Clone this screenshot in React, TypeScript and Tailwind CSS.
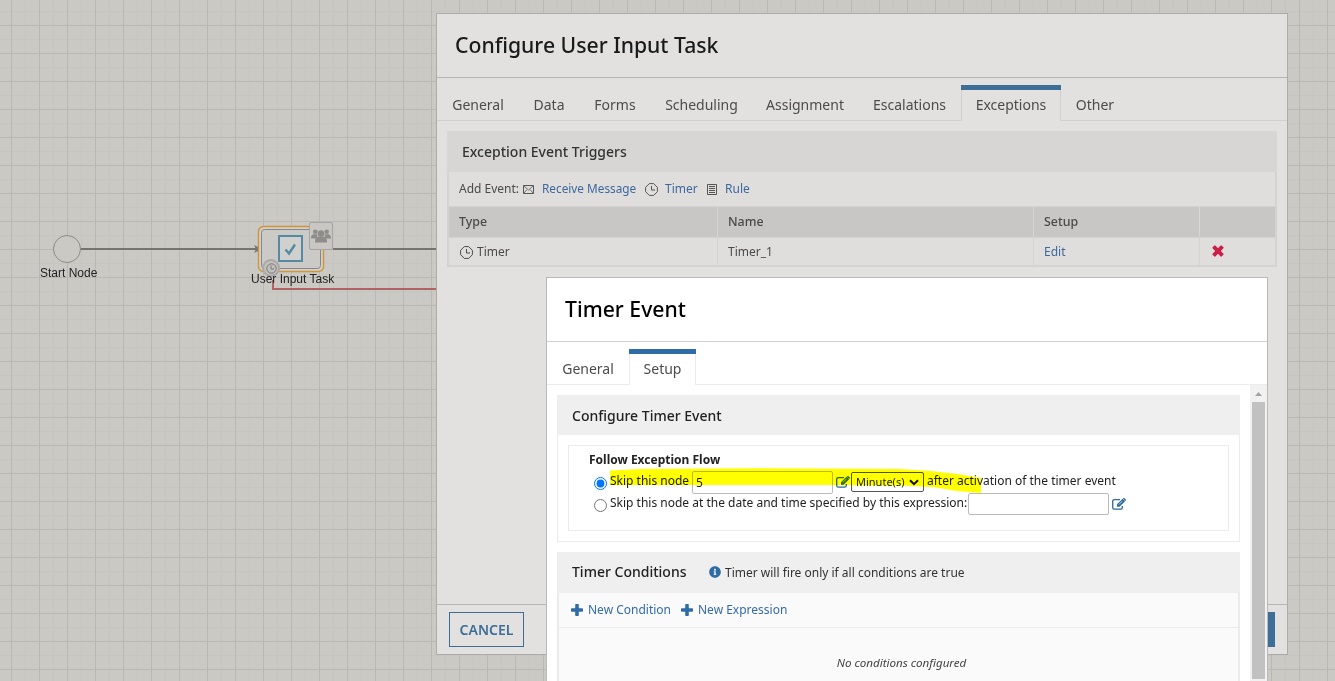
import { ReactNode } from 'react'
import { FaInfoCircle } from 'react-icons/fa'

interface TabProps {
  label: string
  active?: boolean
  faded?: boolean
  className: string
}

function Tab({ label, active = false, faded = false, className }: TabProps) {
  const line = faded ? 'border-[#d0d0ce]' : 'border-[#ebebeb]'
  const bar = faded ? 'bg-[#3c6e98]' : 'bg-[#2f6ca6]'
  return (
    <div className={`flex flex-col shrink-0 ${line} ${active ? '' : 'border-b'} ${className}`}>
      <div className={`h-[5px] shrink-0 ${active ? bar : ''}`} />
      <div className={`flex-1 flex items-center justify-center pb-[2px] text-[14px] ${line} ${active ? 'border-x' : ''}`}>
        <span className="whitespace-nowrap">{label}</span>
      </div>
    </div>
  )
}

function ClockIcon({ className = '' }: { className?: string }) {
  return (
    <svg viewBox="0 0 13 13" className={`w-[13px] h-[13px] shrink-0 ${className}`} fill="none" stroke="currentColor">
      <path d="M4.3.6h4.4l3.7 3.7v4.4l-3.700 3.700H4.300L.6 8.700V4.300z" />
      <path d="M6.500 3v4H10" />
    </svg>
  )
}

function MailIcon() {
  return (
    <svg viewBox="0 0 11 9" className="w-[11px] h-[9px] shrink-0" fill="none" stroke="currentColor">
      <path d="M.5.5h10v8H.5z" />
      <path d="M1 1l4.500 4L10 1M1 8l3-3.500M10 8L7 4.500" strokeWidth=".8" />
    </svg>
  )
}

function RuleIcon() {
  return (
    <svg viewBox="0 0 10 11" className="w-[10px] h-[11px] shrink-0" fill="none" stroke="currentColor">
      <path d="M.5.5h9v10h-9zM2 2.500h6M2 4.500h6M2 6.500h6M2 8.500h6" />
    </svg>
  )
}

function PlusIcon({ className }: { className: string }) {
  return (
    <svg viewBox="0 0 12 12" className={`w-3 h-3 shrink-0 ${className}`} fill="currentColor">
      <path d="M5 0h2q.8 0 .8.800v3.400h3.400q.8 0 .8.800v2q0 .8-.8.800H7.800v3.400q0 .8-.8.800H5q-.8 0-.8-.8V7.800H.8Q0 7.800 0 7V5q0-.8.800-.8h3.400V.8Q4.200 0 5 0z" />
    </svg>
  )
}

function EditIcon() {
  return (
    <svg viewBox="0 0 14 12" className="w-[14px] h-[12px] shrink-0 ml-[3px] mt-[5px] text-[#2a6a9e]" fill="none" stroke="currentColor">
      <path d="M8 1.600H2.500Q.7 1.600.7 3.400v6q0 1.800 1.800 1.800h6q1.800 0 1.800-1.800V8" strokeWidth="1.300" />
      <path d="M5 6.300L10.600.7l2.500 2.500-5.600 5.600H5z" fill="currentColor" stroke="none" />
      <path d="M6.900 6.500l3.500-3.500" stroke="#fff" strokeWidth=".7" />
      <path d="M11.300 0q.5-.3.900 0l1.600 1.600q.3.4 0 .8l-.5.500L10.900.500z" fill="currentColor" stroke="none" />
    </svg>
  )
}

function GroupIcon() {
  return (
    <svg viewBox="0 0 20 14" className="w-5 h-[14px] shrink-0" fill="currentColor">
      <circle cx="4.300" cy="2.800" r="2.300" />
      <circle cx="15.700" cy="2.800" r="2.300" />
      <path d="M0 9.500Q0 5.500 2.500 5.200h4L5.500 9.500zM20 9.500Q20 5.500 17.500 5.200h-4l1 4.300z" />
      <circle cx="10" cy="4.600" r="3.300" />
      <path d="M4 13.500q-.3-5 3-6h6q3.300 1 3 6z" />
    </svg>
  )
}

function Dialog({ title, className, children }: { title: string; className: string; children: ReactNode }) {
  return (
    <div className={`absolute flex flex-col border ${className}`}>
      <h1 className="h-[63px] shrink-0 flex items-center pl-[18px] pb-px text-[21.200px] font-medium whitespace-nowrap">
        <span>{title}</span>
      </h1>
      {children}
    </div>
  )
}

function Canvas() {
  return (
    <>
      <svg className="absolute left-0 top-0 w-[436px] h-[681px]" fill="none">
        <path d="M81 249H258M333 249H436" stroke="#75746f" strokeWidth="2" />
        <path d="M254 245l8 4-8 4 2-4z" fill="#75746f" />
        <circle cx="67" cy="249" r="13.500" fill="#cac9c4" stroke="#8c8b88" />
        <rect x="258.500" y="226.500" width="65" height="45" rx="5" fill="#d2d1cd" stroke="#cf9537" strokeWidth="1.400" />
        <rect x="261.500" y="229.500" width="59" height="39" rx="3" fill="#cbcac6" stroke="#85858a" />
        <path d="M279 236h23v25h-23z" fill="#d0d0ce" stroke="#558aa2" strokeWidth="2" />
        <path d="M285.500 249.500l3.500 4 6-9" stroke="#558aa2" strokeWidth="2.400" />
        <path d="M273 280v9h163" stroke="#ad6462" strokeWidth="2" />
      </svg>
      <div className="absolute left-[309px] top-[222px] w-6 h-7 rounded-[2px] border border-[#a6a5a2] bg-[#c8c7c3] flex items-center justify-center text-[#8e8d89]">
        <GroupIcon />
      </div>
      <div className="absolute left-[262px] top-[259px] w-[18px] h-[18px] rounded-full border-2 border-[#a9a8a5] bg-[#c2c1bd] flex items-center justify-center text-[#777672]">
        <svg viewBox="0 0 11 11" className="w-[11px] h-[11px]" fill="none" stroke="currentColor">
          <circle cx="5.500" cy="5.500" r="4.700" />
          <path d="M5 2.500V6h3" />
        </svg>
      </div>
      <div className="absolute left-[40px] top-[265px] font-['Liberation_Sans'] text-[12px] leading-4 text-[#222] whitespace-nowrap">Start Node</div>
      <div className="absolute left-[251px] top-[271px] font-['Liberation_Sans'] text-[12px] leading-4 text-[#222] whitespace-nowrap">User Input Task</div>
    </>
  )
}

function ConfigureDialog() {
  return (
    <Dialog title="Configure User Input Task" className="left-[436px] top-[13px] w-[852px] h-[642px] bg-[#e2e1df] border-[#adaca9] text-[#1a1a1a]">
      <div className="h-11 shrink-0 flex border-t border-[#b7b6b4] pt-[7px] text-[#4c4c4c]">
        <Tab faded label="General" className="w-[82px]" />
        <Tab faded label="Data" className="w-[60px]" />
        <Tab faded label="Forms" className="w-[72px]" />
        <Tab faded label="Scheduling" className="w-[101px]" />
        <Tab faded label="Assignment" className="w-[106px]" />
        <Tab faded label="Escalations" className="w-[103px]" />
        <Tab faded active label="Exceptions" className="w-[100px]" />
        <Tab faded label="Other" className="w-[68px]" />
        <div className="flex-1 border-b border-[#d0d0ce]" />
      </div>

      <div className="mt-[10px] mx-[10px] bg-[#dfdedc] border-2 border-t-0 border-[#d4d3d1] text-[12px] text-[#4a4a4a]">
        <div className="h-[41px] -mx-[2px] bg-[#d7d6d4] flex items-center pl-[15px] text-[14px] font-medium text-[#333]">
          Exception Event Triggers
        </div>
        <div className="h-[34px] flex items-center pl-[10px] text-[#3d689f] whitespace-nowrap">
          <span className="w-[64px] text-[#4a4a4a]">Add Event:</span>
          <span className="w-[19px] text-[#555]"><MailIcon /></span>
          <span className="w-[103px] text-[11.800px]">Receive Message</span>
          <span className="w-[20px] text-[#555]"><ClockIcon /></span>
          <span className="w-[42px]">Timer</span>
          <span className="w-[18px] text-[#555]"><RuleIcon /></span>
          <span>Rule</span>
        </div>
        <div className="h-[32px] grid grid-cols-[269px_316px_166px_1fr] border-y border-[#d4d3d1] bg-[#c8c7c5] text-[12.400px] font-medium">
          <div className="flex items-center pl-[10px] border-r border-[#d7d6d4]">Type</div>
          <div className="flex items-center pl-[10px] border-r border-[#d7d6d4]">Name</div>
          <div className="flex items-center pl-[10px] border-r border-[#d7d6d4]">Setup</div>
          <div />
        </div>
        <div className="h-[27px] grid grid-cols-[269px_316px_166px_1fr]">
          <div className="flex items-center gap-1 pl-[11px] border-r border-[#d4d3d1]"><ClockIcon className="mt-px" />Timer</div>
          <div className="flex items-center pt-px pl-[10px] border-r border-[#d4d3d1]">Timer_1</div>
          <div className="flex items-center pt-px pl-[10px] border-r border-[#d4d3d1] text-[#3d689f]">Edit</div>
          <div className="flex items-center pb-px pl-3 text-[#cb1f48]"><PlusIcon className="rotate-45 scale-110" /></div>
        </div>
      </div>

      <div className="mt-auto h-[50px] border-t border-[#b7b6b4] flex items-center justify-between pl-3 pr-3">
        <button className="w-[75px] h-[35px] border border-[#3c6e98] text-[14px] font-semibold text-[#3c6e98]">CANCEL</button>
        <button className="w-[75px] h-[35px] bg-[#3c6e98] text-[14px] font-semibold text-white" />
      </div>
    </Dialog>
  )
}

function TimerDialog() {
  return (
    <Dialog title="Timer Event" className="left-[546px] top-[277px] w-[722px] h-[410px] bg-white border-[#b9b9b8] text-black">
      <div className="h-11 shrink-0 flex border-t border-[#cfcfcf] pt-[7px] text-[#4c4c4c]">
        <Tab label="General" className="w-[82px]" />
        <Tab active label="Setup" className="w-[67px]" />
        <div className="flex-1 border-b border-[#ebebeb]" />
      </div>

      <div className="flex-1 flex min-h-0">
        <div className="w-[703px] shrink-0 pl-[10px] pr-[10px] pt-[10px]">
          <div className="h-[147px] border border-t-0 border-[#ebebeb]">
            <div className="h-[40px] -mx-px bg-[#efefef] flex items-center pl-[15px] text-[14px] font-medium text-[#222]">
              Configure Timer Event
            </div>
            <div className="relative mt-[10px] mx-[10px] h-[86px] border border-[#ebebeb] pl-5 text-[12px] text-[#222] whitespace-nowrap">
              <div className="mt-[4px] h-[21px] leading-5 font-bold">Follow Exception Flow</div>
              <div className="h-[22px] flex items-start">
                <input type="radio" defaultChecked className="w-[13px] h-[13px] ml-[5px] mt-[6px] mr-[3px]" />
                <span className="w-[82px] leading-5">Skip this node</span>
                <span className="w-[141px] h-[23px] border border-[#bbb] rounded-[2px] pl-[3px] leading-[21px]">5</span>
                <EditIcon />
                <span className="w-[73px] h-[20px] ml-px mt-px mr-[3px] border border-[#555] rounded-[2px] pl-[4px] flex items-center justify-between pr-[4px] text-[11px]">
                  Minute(s)
                  <svg viewBox="0 0 10 7" className="w-[10px] h-[7px]" fill="none" stroke="#111" strokeWidth="2">
                    <path d="M1 1.200l4 4 4-4" />
                  </svg>
                </span>
                <span className="leading-5">after activation of the timer event</span>
              </div>
              <div className="h-[22px] flex items-start">
                <input type="radio" className="w-[13px] h-[13px] ml-[5px] mt-[6px] mr-[3px]" />
                <span className="w-[358px] leading-5">Skip this node at the date and time specified by this expression:</span>
                <span className="w-[141px] h-[22px] border border-[#bbb] rounded-[2px]" />
                <EditIcon />
              </div>
              {/* marker stroke over the first option */}
              <svg viewBox="0 0 374 27" className="absolute left-[40px] top-[21px] w-[374px] h-[27px] mix-blend-multiply" fill="#ffff00">
                <path d="M1 3.500L32 2 150 1.300 290 2 322 4l26 3 24 4v15l-24-2-24-4-31-1.500-70-.5H1z" />
              </svg>
            </div>
          </div>

          <div className="mt-[10px] h-[140px] bg-[#fafafa] border-x-2 border-[#ebebeb] text-[12px]">
            <div className="h-[41px] -mx-[2px] bg-[#efefef] flex items-center pl-[15px] whitespace-nowrap">
              <span className="w-[137px] pb-[2px] text-[14px] font-medium text-[#222]">Timer Conditions</span>
              <FaInfoCircle className="w-[12px] h-[12px] mr-[4px] mb-[2px] text-[#2f6ca6]" />
              <span className="text-[#333]">Timer will fire only if all conditions are true</span>
            </div>
            <div className="h-[35px] flex items-center pl-3 border-b border-[#ebebeb] text-[#346bad] whitespace-nowrap">
              <PlusIcon className="mr-[5px] mb-px text-[#2f6ca6]" />
              <span className="w-[93px]">New Condition</span>
              <PlusIcon className="mr-[5px] mb-px text-[#2f6ca6]" />
              <span>New Expression</span>
            </div>
            <div className="pt-[25px] text-center leading-5 italic text-[#444] pl-[6px] text-[11.600px]">No conditions configured</div>
          </div>
        </div>

        <div className="w-[17px] shrink-0 bg-[#f1f1f1] flex flex-col items-center">
          <svg viewBox="0 0 7 4" className="w-[7px] h-[4px] mt-[7px] mb-[6px] shrink-0" fill="#a3a3a3">
            <path d="M3.500 0L7 4H0z" />
          </svg>
          <div className="w-[13px] h-[277px] shrink-0 bg-[#c1c1c1]" />
        </div>
      </div>
    </Dialog>
  )
}

export default function App() {
  return (
    <div className="relative w-[1335px] h-[681px] overflow-hidden bg-[#cac9c4] bg-[linear-gradient(to_right,#b9b8b4_1px,transparent_1px),linear-gradient(to_bottom,#b9b8b4_1px,transparent_1px),linear-gradient(to_right,#c6c5c1_1px,transparent_1px),linear-gradient(to_bottom,#c6c5c1_1px,transparent_1px)] bg-[size:28px_28px,28px_28px,14px_14px,14px_14px] bg-[position:11px_25px] font-['Noto_Sans',sans-serif]">
      <Canvas />
      <ConfigureDialog />
      <TimerDialog />
    </div>
  )
}
